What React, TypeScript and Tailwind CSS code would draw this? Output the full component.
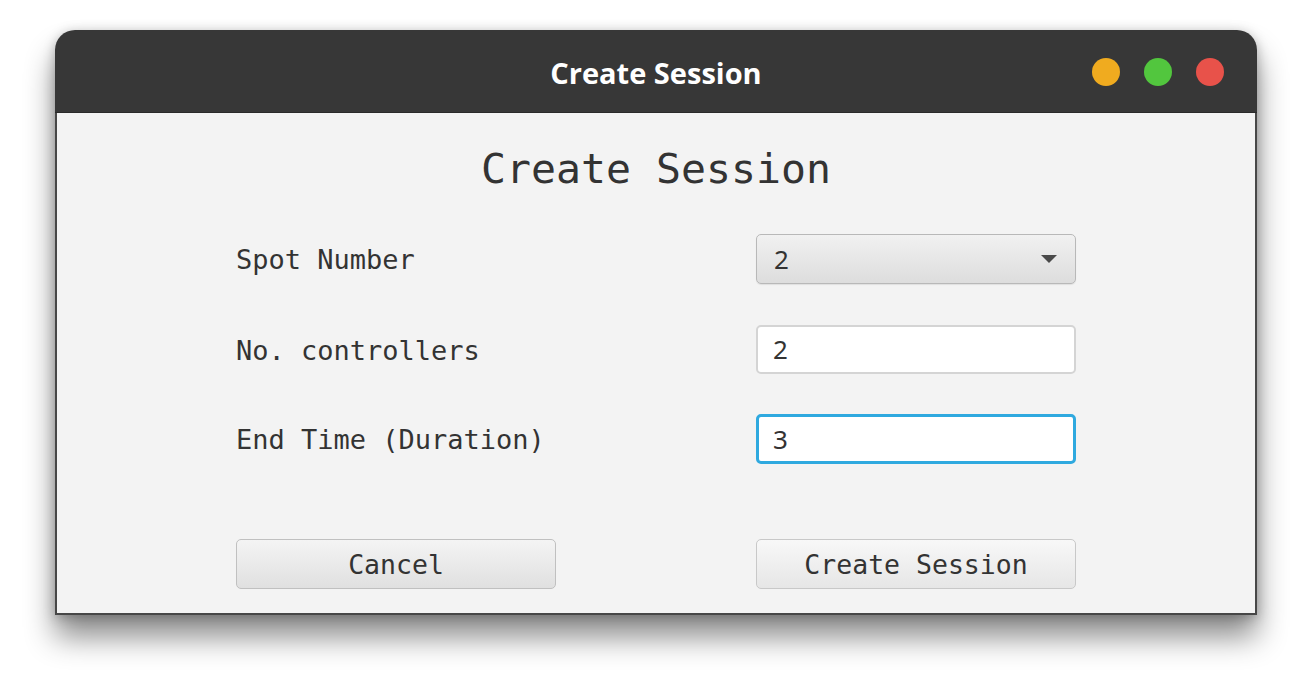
import React from "react";

const mono = { fontFamily: '"DejaVu Sans Mono", "Liberation Mono", monospace' };

export default function App() {
  return (
    <div className="w-[1312px] h-[694px] bg-white overflow-hidden">
      <div className="ml-[55px] mt-[30px] w-[1202px] flex flex-col rounded-t-[20px] overflow-hidden shadow-[0_22px_30px_rgba(0,0,0,0.45),0_2px_12px_rgba(0,0,0,0.25)]">
        <div className="relative h-[83px] bg-[#373737] flex items-center justify-center border-b border-[#2a2a2a]">
          <span
            className="text-white font-bold text-[29px] leading-none mt-[3px]"
            style={{ fontFamily: '"Open Sans", "Noto Sans", sans-serif' }}
          >
            Create Session
          </span>
          <div className="absolute right-[33px] top-[28px] flex gap-[24px]">
            <div className="w-[28px] h-[28px] rounded-full bg-[#f0ab1f]" />
            <div className="w-[28px] h-[28px] rounded-full bg-[#52c63e]" />
            <div className="w-[28px] h-[28px] rounded-full bg-[#e8524a]" />
          </div>
        </div>
        <div
          className="h-[502px] bg-[#f3f3f3] border-x-2 border-b-2 border-[#474747] flex flex-col px-[179px] text-[#333]"
          style={mono}
        >
          <div className="mt-[32px] h-[48px] leading-[48px] text-[41.5px] text-center text-[#333]">
            Create Session
          </div>
          <div className="mt-[41px] flex flex-col gap-[40px]">
            <div className="flex justify-between items-center h-[50px]">
              <span className="text-[27px] leading-none">Spot Number</span>
              <div className="w-[320px] h-[50px] rounded-[5px] border border-[#b8b8b8] bg-gradient-to-b from-[#f1f1f1] to-[#dddddd] flex items-center justify-between pl-[17px] pr-[17px] shadow-[0_1px_1px_rgba(0,0,0,0.08)]">
                <span className="text-[26px] leading-none" style={{ fontFamily: '"Noto Sans", "Open Sans", sans-serif' }}>2</span>
                <svg width="18" height="10" viewBox="0 0 18 10">
                  <path d="M1 1 L17 1 L9 9 Z" fill="#4a4a4a" />
                </svg>
              </div>
            </div>
            <div className="flex justify-between items-center h-[50px]">
              <span className="text-[27px] leading-none mt-[2px]">No. controllers</span>
              <div className="w-[320px] h-[49px] rounded-[5px] border-2 border-[#d4d4d4] bg-white flex items-center pl-[15px]">
                <span className="text-[26px] leading-none" style={{ fontFamily: '"Noto Sans", "Open Sans", sans-serif' }}>2</span>
              </div>
            </div>
            <div className="flex justify-between items-center h-[50px]">
              <span className="text-[27px] leading-none">End Time (Duration)</span>
              <div className="w-[320px] h-[50px] rounded-[5px] border-[3px] border-[#2fa9df] bg-white flex items-center pl-[14px]">
                <span className="text-[26px] leading-none" style={{ fontFamily: '"Noto Sans", "Open Sans", sans-serif' }}>3</span>
              </div>
            </div>
          </div>
          <div className="mt-[75px] flex justify-between">
            <button className="w-[320px] h-[50px] rounded-[5px] border border-[#c0c0c0] bg-gradient-to-b from-[#f4f4f4] to-[#e0e0e0] text-[26.5px] leading-none text-[#333] pt-[2px]" style={mono}>
              Cancel
            </button>
            <button className="w-[320px] h-[50px] rounded-[5px] border border-[#c8c8c8] bg-gradient-to-b from-[#f8f8f8] to-[#e6e6e6] text-[26.5px] leading-none text-[#333] pt-[2px]" style={mono}>
              Create Session
            </button>
          </div>
        </div>
      </div>
    </div>
  );
}
